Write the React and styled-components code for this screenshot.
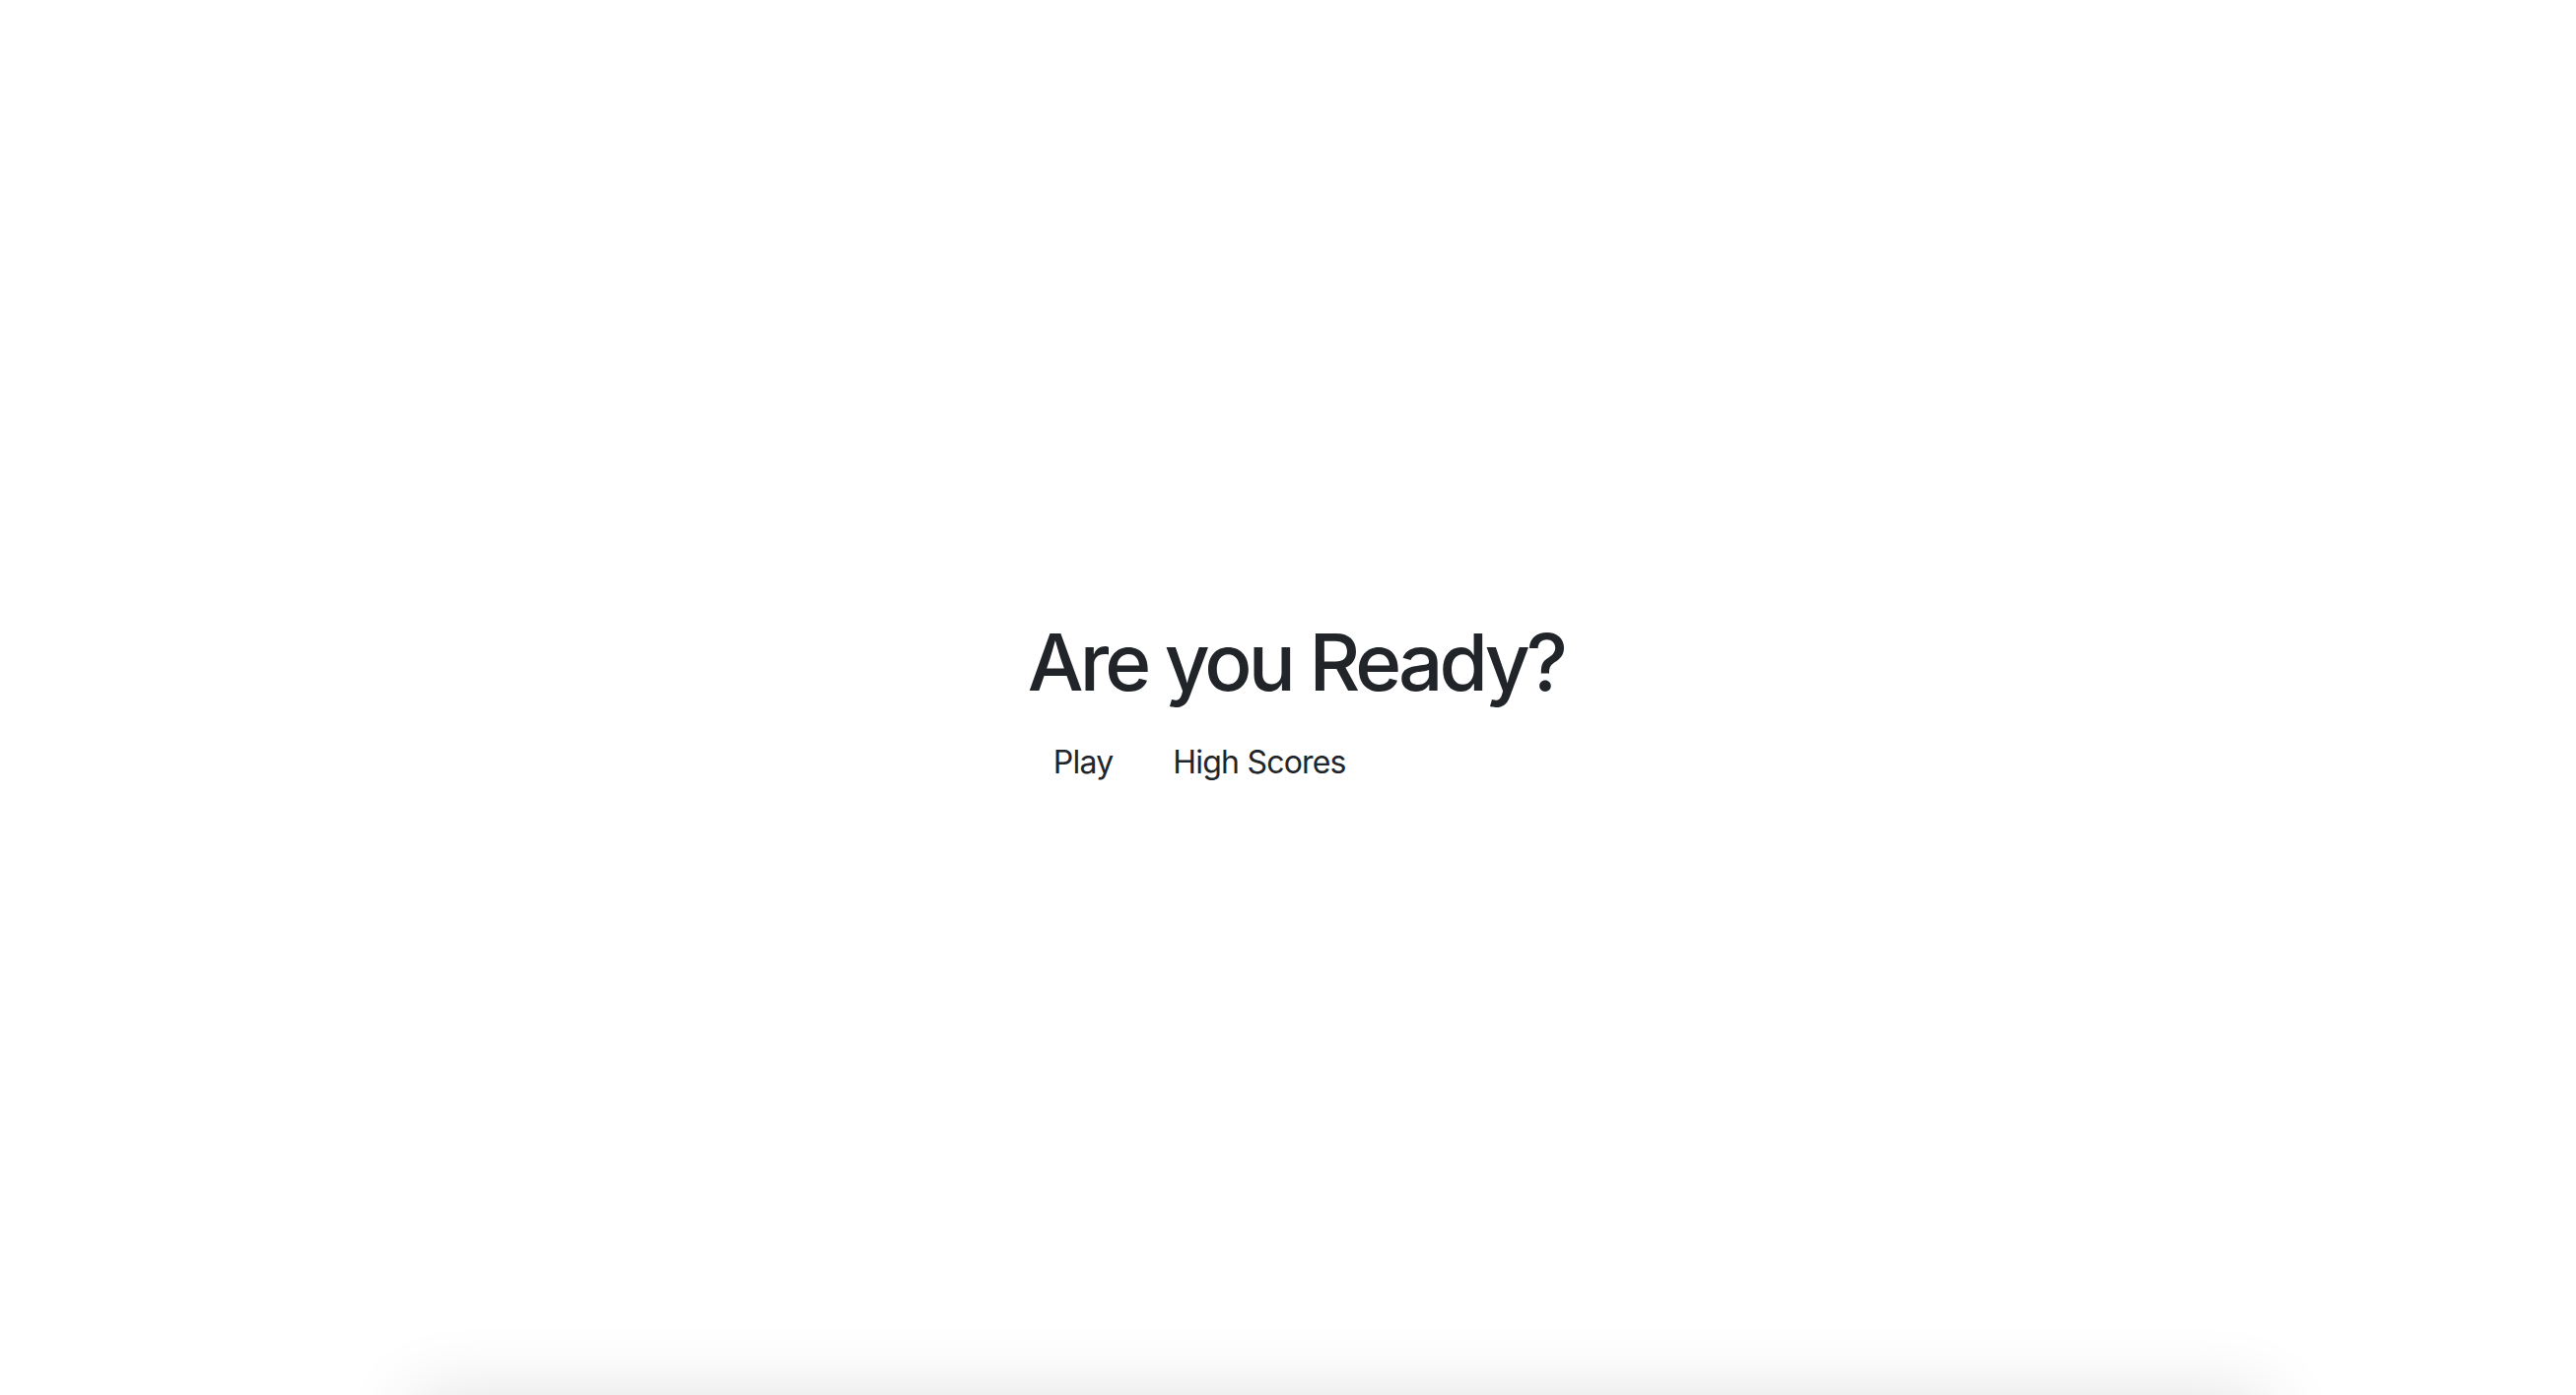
import React from 'react'
import styled, { createGlobalStyle } from 'styled-components'

const GlobalStyle = createGlobalStyle`
    html, body {
        margin: 0;
        padding: 0;
        background: #fff;
        overflow: hidden;
    }
    body {
        font-family: Inter, "Noto Sans", "Liberation Sans", sans-serif;
        color: #212529;
    }
`

const Screen = styled.main`
    height: 1416px;
    display: flex;
    align-items: center;
    justify-content: center;
`

const Menu = styled.div`
    display: flex;
    flex-direction: column;
    align-items: flex-start;
    margin: 20px 0 0 16px;
`

const Title = styled.h1`
    margin: 0 0 16px;
    font-size: 80px;
    font-weight: 500;
    line-height: 1.2;
    letter-spacing: -3.9px;
    color: #212529;
`

const Actions = styled.div`
    display: flex;
    gap: 9px;
`

const Button = styled.button`
    font-family: inherit;
    font-size: 32px;
    line-height: 1.5;
    font-weight: 400;
    letter-spacing: -0.8px;
    color: #212529;
    background: transparent;
    border: 2px solid transparent;
    border-radius: 12px;
    padding: 12px 24px;
    cursor: pointer;
`

const Below = styled.section`
    width: 1880px;
    height: 600px;
    margin-left: 420px;
    background: #fff;
    box-shadow: 0 0 70px rgba(0, 0, 0, 0.12);
`

const App = () => {
    return (
        <>
            <GlobalStyle />
            <Screen>
                <Menu>
                    <Title>Are you Ready?</Title>
                    <Actions>
                        <Button>Play</Button>
                        <Button>High Scores</Button>
                    </Actions>
                </Menu>
            </Screen>
            <Below />
        </>
    )
}

export default App
